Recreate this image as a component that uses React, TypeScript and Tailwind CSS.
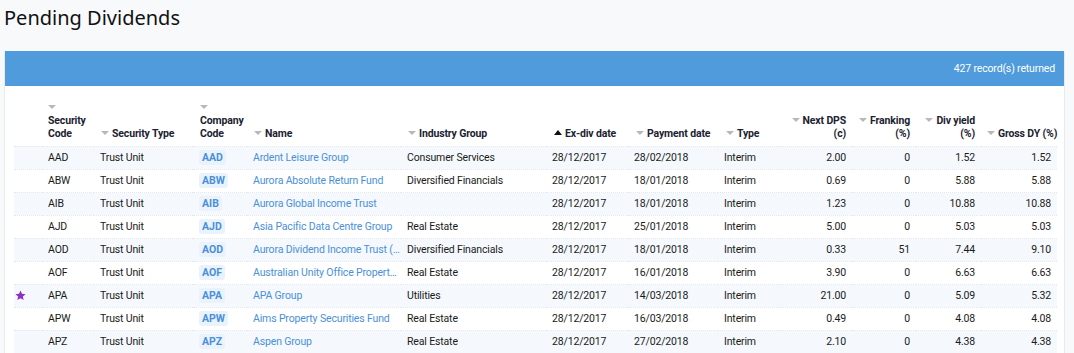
import React from "react";

type Row = {
  code: string;
  name: string;
  industry: string;
  pay: string;
  dps: string;
  frank: string;
  dy: string;
  gdy: string;
  star?: boolean;
};

const rows: Row[] = [
  { code: "AAD", name: "Ardent Leisure Group", industry: "Consumer Services", pay: "28/02/2018", dps: "2.00", frank: "0", dy: "1.52", gdy: "1.52" },
  { code: "ABW", name: "Aurora Absolute Return Fund", industry: "Diversified Financials", pay: "18/01/2018", dps: "0.69", frank: "0", dy: "5.88", gdy: "5.88" },
  { code: "AIB", name: "Aurora Global Income Trust", industry: "", pay: "18/01/2018", dps: "1.23", frank: "0", dy: "10.88", gdy: "10.88" },
  { code: "AJD", name: "Asia Pacific Data Centre Group", industry: "Real Estate", pay: "25/01/2018", dps: "5.00", frank: "0", dy: "5.03", gdy: "5.03" },
  { code: "AOD", name: "Aurora Dividend Income Trust (Managed Fund)", industry: "Diversified Financials", pay: "18/01/2018", dps: "0.33", frank: "51", dy: "7.44", gdy: "9.10" },
  { code: "AOF", name: "Australian Unity Office Property Fund", industry: "Real Estate", pay: "16/01/2018", dps: "3.90", frank: "0", dy: "6.63", gdy: "6.63" },
  { code: "APA", name: "APA Group", industry: "Utilities", pay: "14/03/2018", dps: "21.00", frank: "0", dy: "5.09", gdy: "5.32", star: true },
  { code: "APW", name: "Aims Property Securities Fund", industry: "Real Estate", pay: "16/03/2018", dps: "0.49", frank: "0", dy: "4.08", gdy: "4.08" },
  { code: "APZ", name: "Aspen Group", industry: "Real Estate", pay: "27/02/2018", dps: "2.10", frank: "0", dy: "4.38", gdy: "4.38" },
];

const Down = () => (
  <span className="inline-block align-[2px] mr-[3px] w-0 h-0 border-l-[4px] border-r-[4px] border-t-[4px] border-l-transparent border-r-transparent border-t-[#b5b9bf]" />
);
const Up = () => (
  <span className="inline-block align-[2px] mr-[3px] w-0 h-0 border-l-[4px] border-r-[4px] border-b-[5px] border-l-transparent border-r-transparent border-b-[#111]" />
);

const Star = () => (
  <svg width="11" height="11" viewBox="0 0 24 24" className="inline-block">
    <path
      d="M12 1l3.2 7.3 7.9.7-6 5.2 1.8 7.8L12 17.9 5.1 22l1.8-7.8-6-5.2 7.9-.7z"
      fill="#8b2fc9"
    />
  </svg>
);

export default function App() {
  const th = "px-[6px] pb-[6px] align-bottom font-bold text-[#1c2230] text-[10.5px] leading-[13px] whitespace-nowrap";
  const td = "px-[6px] h-[23px] align-middle whitespace-nowrap overflow-hidden";
  return (
    <div
      className="w-[1074px] h-[353px] overflow-hidden bg-[#f8f9fb] text-[10.5px] text-[#1a1a1a] tracking-[-0.15px]"
      style={{ fontFamily: 'Roboto, Lato, sans-serif' }}
    >
      <h1
        className="pl-[4px] pt-[4px] h-[51px] text-[20px] leading-[28px] text-[#111] font-normal tracking-normal"
        style={{ fontFamily: '"Noto Sans", sans-serif' }}
      >
        Pending Dividends
      </h1>
      <div className="ml-[4px] w-[1061px] bg-white border border-[#e8ebef] border-t-0 rounded-t-[2px]">
        <div className="h-[35px] bg-[#4f9bdc] flex items-center justify-end pr-[9px] text-white text-[10.5px]">
          427 record(s) returned
        </div>
        <div className="px-[9px]">
          <table className="table-fixed border-collapse w-[1043px]">
            <colgroup>
              <col className="w-[28px]" />
              <col className="w-[52px]" />
              <col className="w-[99px]" />
              <col className="w-[54px]" />
              <col className="w-[154px]" />
              <col className="w-[145px]" />
              <col className="w-[82px]" />
              <col className="w-[90px]" />
              <col className="w-[63px]" />
              <col className="w-[71px]" />
              <col className="w-[64px]" />
              <col className="w-[65px]" />
              <col className="w-[76px]" />
            </colgroup>
            <thead>
              <tr className="h-[60px]">
                <th className={th}></th>
                <th className={th + " text-left"}>
                  <div className="h-[13px] leading-[13px]"><Down /></div>
                  <div>Security</div>
                  <div>Code</div>
                </th>
                <th className={th + " text-left pl-[7px]"}><Down />Security Type</th>
                <th className={th + " text-left pl-[7px]"}>
                  <div className="h-[13px] leading-[13px]"><Down /></div>
                  <div>Company</div>
                  <div>Code</div>
                </th>
                <th className={th + " text-left pl-[7px]"}><Down />Name</th>
                <th className={th + " text-left pl-[7px]"}><Down />Industry Group</th>
                <th className={th + " text-left pl-[8px]"}><Up />Ex-div date</th>
                <th className={th + " text-left pl-[8px]"}><Down />Payment date</th>
                <th className={th + " text-left pl-[8px]"}><Down />Type</th>
                <th className={th + " text-right"}>
                  <div><Down />Next DPS</div>
                  <div>(c)</div>
                </th>
                <th className={th + " text-right"}>
                  <div><Down />Franking</div>
                  <div>(%)</div>
                </th>
                <th className={th + " text-right"}>
                  <div><Down />Div yield</div>
                  <div>(%)</div>
                </th>
                <th className={th + " text-right"}><Down />Gross DY (%)</th>
              </tr>
            </thead>
            <tbody>
              {rows.map((r, i) => (
                <tr
                  key={r.code}
                  className={
                    (i % 2 === 0 ? "bg-[#f5f9fd] " : "bg-white ") +
                    "border-t border-dotted border-[#e2e8ef]"
                  }
                >
                  <td className="pl-[1px] h-[23px] align-middle">{r.star ? <Star /> : null}</td>
                  <td className={td}>{r.code}</td>
                  <td className={td}>Trust Unit</td>
                  <td className={td}>
                    <span className="inline-block bg-[#eaf3fc] rounded-[3px] px-[3px] leading-[15px] font-bold text-[#4a90d9] tracking-normal">
                      {r.code}
                    </span>
                  </td>
                  <td className="pl-[6px] pr-[1px] h-[23px] align-middle whitespace-nowrap overflow-hidden text-ellipsis text-[#4a90d9]">
                    {r.name}
                  </td>
                  <td className={td}>{r.industry}</td>
                  <td className={td}>28/12/2017</td>
                  <td className={td}>{r.pay}</td>
                  <td className={td}>Interim</td>
                  <td className={td + " text-right"}>{r.dps}</td>
                  <td className={td + " text-right"}>{r.frank}</td>
                  <td className={td + " text-right"}>{r.dy}</td>
                  <td className={td + " text-right"}>{r.gdy}</td>
                </tr>
              ))}
            </tbody>
          </table>
        </div>
      </div>
    </div>
  );
}
